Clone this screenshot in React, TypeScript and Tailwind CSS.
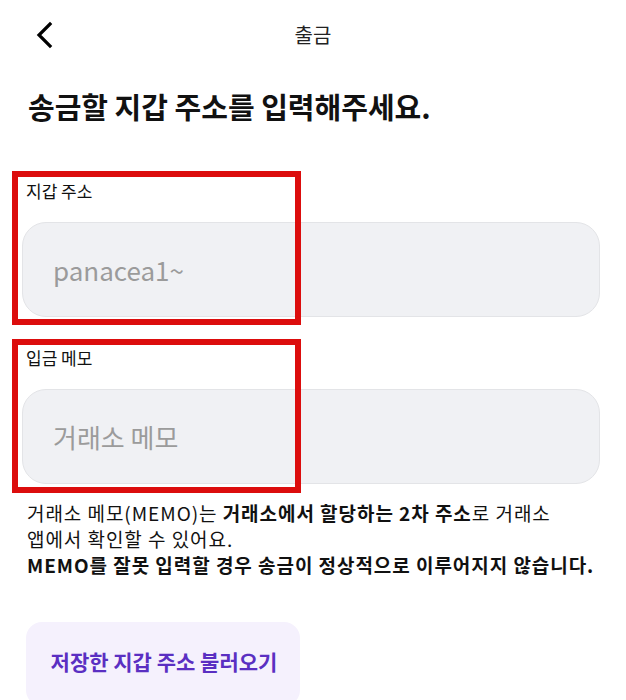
import { useState } from 'react'

const font = { fontFamily: '"Noto Sans CJK KR", "Noto Sans", sans-serif' }

function Field({
  label,
  placeholder,
}: {
  label: string
  placeholder: string
}) {
  const [value, setValue] = useState('')
  return (
    <div className="flex flex-col">
      <label className="pl-[4px] text-[17px] leading-[22px] text-[#111]">{label}</label>
      <input
        value={value}
        onChange={(e) => setValue(e.target.value)}
        placeholder={placeholder}
        className="mt-[20px] h-[95px] w-full rounded-[24px] border border-[#e3e4e7] bg-[#f0f1f4] px-[30px] text-[26px] text-[#333] outline-none placeholder:text-[#9b9b9b]"
      />
    </div>
  )
}

export default function App() {
  return (
    <div className="relative h-[700px] w-[626px] overflow-hidden bg-white" style={font}>
      {/* header */}
      <div className="relative flex h-[70px] items-center">
        <button className="ml-[30px] flex h-[30px] w-[30px] items-center justify-center">
          <svg width="22" height="28" viewBox="0 0 22 28" fill="none">
            <path d="M16 3 L5 14 L16 25" stroke="#000" strokeWidth="3.2" strokeLinecap="square" />
          </svg>
        </button>
        <h1 className="absolute left-1/2 -translate-x-1/2 text-[20px] text-[#222]">출금</h1>
      </div>

      <div className="pl-[22px] pr-[26px]">
        <h2 className="mt-[18px] pl-[6px] text-[29px] font-bold leading-[36px] text-[#111]">
          송금할 지갑 주소를 입력해주세요.
        </h2>

        <div className="mt-[56px]">
          <Field label="지갑 주소" placeholder="panacea1~" />
        </div>
        <div className="mt-[30px]">
          <Field label="입금 메모" placeholder="거래소 메모" />
        </div>

        <div className="mt-[16px] pl-[5px] text-[19px] leading-[26px] tracking-[0.05em] text-[#111]">
          <p>
            거래소 메모(MEMO)는 <span className="font-bold">거래소에서 할당하는 2차 주소</span>로 거래소
          </p>
          <p>앱에서 확인할 수 있어요.</p>
          <p className="font-bold">MEMO를 잘못 입력할 경우 송금이 정상적으로 이루어지지 않습니다.</p>
        </div>

        <button className="ml-[4px] mt-[44px] flex h-[84px] w-[274px] items-center justify-center rounded-[16px] bg-[#f5f1fd] pb-[4px] pl-[2px] text-[21px] font-bold text-[#5a2fc2]">
          저장한 지갑 주소 불러오기
        </button>
      </div>

      {/* annotation boxes */}
      <div className="pointer-events-none absolute left-[12px] top-[171px] h-[154px] w-[289px] border-[6px] border-[#dc0d0d]" />
      <div className="pointer-events-none absolute left-[12px] top-[339px] h-[154px] w-[289px] border-[6px] border-[#dc0d0d]" />
    </div>
  )
}
